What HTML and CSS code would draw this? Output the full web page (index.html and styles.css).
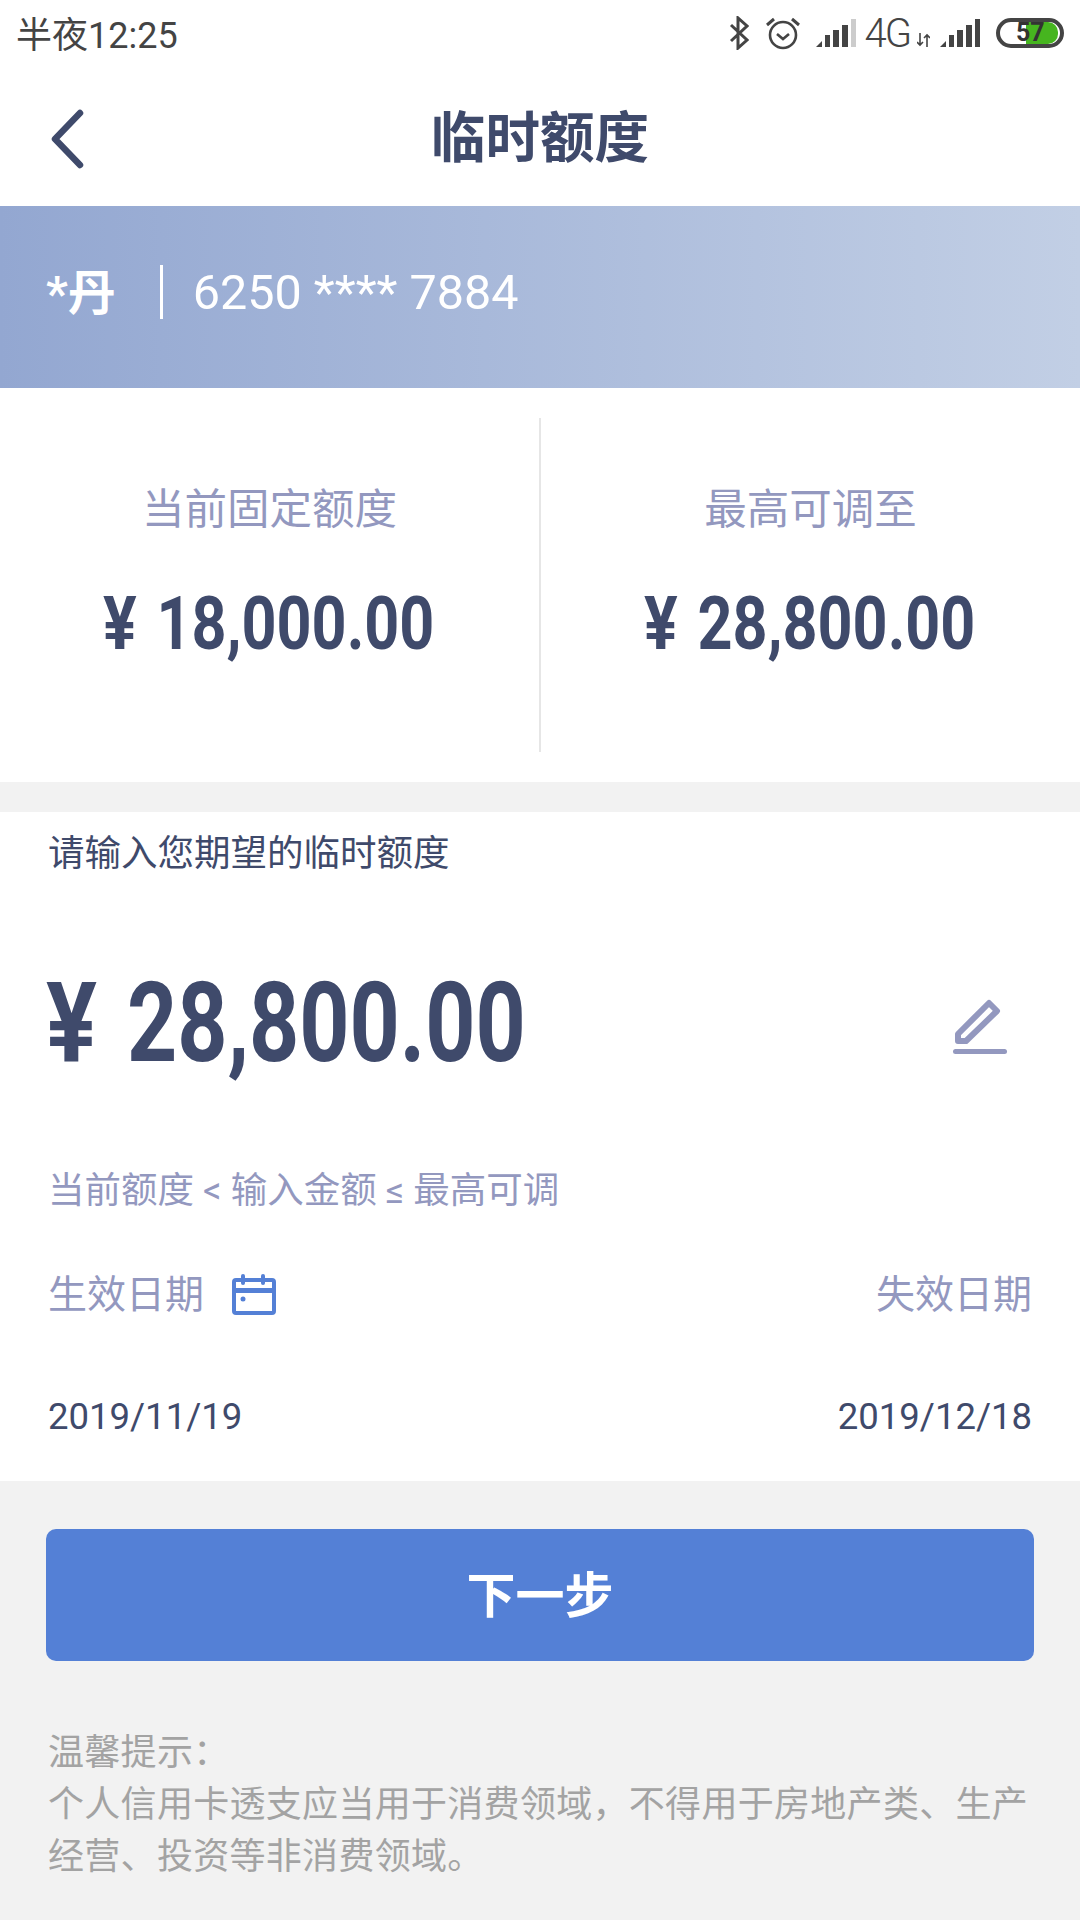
FILE: index.html
```html
<!DOCTYPE html>
<html lang="zh-CN">
<head>
    <meta charset="UTF-8">
    <meta name="viewport" content="width=device-width, initial-scale=1.0">
    <title>临时额度</title>
    <link rel="stylesheet" href="styles.css">
</head>
<body>
    <div class="status-bar">
        <span class="status-time">半夜12:25</span>
        <div class="status-icons">
            <svg class="icon-bt" width="20" height="34" viewBox="0 0 20 34"><path d="M2 9 L18 24 L9 32 V2 L18 10 L2 25" fill="none" stroke="#444" stroke-width="3"/></svg>
            <svg class="icon-alarm" width="34" height="34" viewBox="0 0 34 34"><circle cx="17" cy="19" r="13" fill="none" stroke="#444" stroke-width="2.6"/><path d="M11 18 L17 23 L23 18" fill="none" stroke="#444" stroke-width="2.6"/><path d="M1 9 L8 3 M33 9 L26 3" stroke="#444" stroke-width="3"/></svg>
            <svg class="icon-signal" width="40" height="28" viewBox="0 0 40 28"><path d="M0 28 L6 22 V28 Z" fill="#444"/><rect x="9" y="16" width="5" height="12" fill="#444"/><rect x="17" y="11" width="6" height="17" fill="#444"/><rect x="26" y="6" width="6" height="22" fill="#444"/><rect x="35" y="0" width="5" height="28" fill="#ccc"/></svg>
            <span class="status-net">4G</span>
            <svg class="icon-updown" width="13" height="14" viewBox="0 0 13 14"><path d="M3 0 V12 M0 9 L3 12 L6 9 M10 14 V2 M7 5 L10 2 L13 5" fill="none" stroke="#444" stroke-width="1.6"/></svg>
            <svg class="icon-signal" width="40" height="28" viewBox="0 0 40 28"><path d="M0 28 L6 22 V28 Z" fill="#444"/><rect x="9" y="16" width="5" height="12" fill="#444"/><rect x="17" y="11" width="6" height="17" fill="#444"/><rect x="26" y="6" width="6" height="22" fill="#444"/><rect x="35" y="0" width="5" height="28" fill="#444"/></svg>
            <div class="battery"><div class="battery-fill"></div><span class="battery-num">57</span></div>
        </div>
    </div>

    <header class="nav-bar">
        <svg class="back-icon" width="40" height="64" viewBox="0 0 40 64"><path d="M33 6 L8 32 L33 58" fill="none" stroke="#3f4a6b" stroke-width="6.5" stroke-linecap="round" stroke-linejoin="round"/></svg>
        <h1 class="nav-title">临时额度</h1>
    </header>

    <div class="card-banner">
        <span class="card-name">*丹</span>
        <span class="card-sep"></span>
        <span class="card-no">6250 **** 7884</span>
    </div>

    <section class="limits">
        <div class="limit-col">
            <div class="limit-label">当前固定额度</div>
            <div class="limit-value"><span class="yen">¥</span><span class="digits">18,000.00</span></div>
        </div>
        <div class="limit-col">
            <div class="limit-label">最高可调至</div>
            <div class="limit-value"><span class="yen">¥</span><span class="digits">28,800.00</span></div>
        </div>
    </section>

    <section class="form">
        <div class="form-title">请输入您期望的临时额度</div>
        <div class="amount-row">
            <div class="amount"><span class="yen">¥</span><span class="digits">28,800.00</span></div>
            <svg class="edit-icon" width="56" height="58" viewBox="0 0 56 58"><path d="M6 43 V36 L37 5 L45 13 L14 43 Z" fill="none" stroke="#9398bf" stroke-width="6" stroke-linejoin="round"/><rect x="1" y="51" width="54" height="5" rx="2.5" fill="#9398bf"/></svg>
        </div>
        <div class="range-hint">当前额度 &lt; 输入金额 ≤ 最高可调</div>
        <div class="date-labels">
            <div class="date-start">
                <span>生效日期</span>
                <svg class="calendar-icon" width="44" height="42" viewBox="0 0 44 42"><rect x="2" y="6" width="40" height="33" rx="2" fill="none" stroke="#5480d6" stroke-width="4"/><rect x="2" y="14" width="40" height="5" fill="#5480d6"/><rect x="9" y="0" width="4" height="11" rx="2" fill="#5480d6"/><rect x="29" y="0" width="4" height="11" rx="2" fill="#5480d6"/><circle cx="11" cy="25" r="2.5" fill="#5480d6"/></svg>
            </div>
            <span>失效日期</span>
        </div>
        <div class="date-values">
            <span>2019/11/19</span>
            <span>2019/12/18</span>
        </div>
    </section>

    <section class="bottom">
        <button class="next-btn">下一步</button>
        <p class="tips">温馨提示：<br>个人信用卡透支应当用于消费领域，不得用于房地产类、生产经营、投资等非消费领域。</p>
    </section>
</body>
</html>
```

FILE: styles.css
```css
* {
    box-sizing: border-box;
}

body {
    margin: 0;
    width: 1080px;
    height: 1920px;
    overflow: hidden;
    background-color: #f2f2f2;
    font-family: Roboto, "Noto Sans CJK SC", sans-serif;
    color: #3f4a6b;
}

.status-bar {
    height: 68px;
    background-color: #fff;
    display: flex;
    justify-content: space-between;
    align-items: center;
    padding: 0 16px 4px 16px;
    color: #444;
}

.status-time {
    font-size: 36px;
}

.status-icons {
    display: flex;
    align-items: center;
    padding-top: 2px;
}

.icon-alarm {
    margin-left: 17px;
}

.icon-signal {
    margin-left: 16px;
}

.status-net {
    margin-left: 8px;
    font-size: 40px;
    font-weight: 300;
    letter-spacing: -2px;
}

.icon-updown {
    margin: 14px 0 0 7px;
}

.icon-updown + .icon-signal {
    margin-left: 10px;
}

.battery {
    position: relative;
    width: 68px;
    height: 30px;
    margin-left: 16px;
    border: 4px solid #444;
    border-radius: 15px;
    overflow: hidden;
}

.battery-fill {
    width: 32px;
    height: 100%;
    margin-left: 26px;
    background-color: #46b51f;
    border-radius: 0 10px 10px 0;
}

.battery-num {
    position: absolute;
    top: -3px;
    left: 16px;
    font-size: 25px;
    font-weight: 700;
    line-height: 28px;
    color: #333;
}

.nav-bar {
    position: relative;
    height: 138px;
    padding-bottom: 8px;
    background-color: #fff;
    display: flex;
    align-items: center;
    justify-content: center;
}

.back-icon {
    position: absolute;
    left: 47px;
    top: 39px;
}

.nav-title {
    margin: 0;
    font-size: 54.5px;
    font-weight: 700;
    color: #3f4a6b;
}

.card-banner {
    height: 182px;
    display: flex;
    align-items: center;
    padding: 0 0 10px 46px;
    color: #fff;
    background: linear-gradient(90deg, #93a7d1, #c2cfe5);
}

.card-name {
    margin-bottom: 6px;
    font-size: 48px;
    font-weight: 700;
}

.card-sep {
    width: 3px;
    height: 54px;
    margin: 0 30px 0 44px;
    background-color: #fff;
}

.card-no {
    font-size: 48.5px;
}

.limits {
    height: 394px;
    padding: 30px 0;
    background-color: #fff;
    display: flex;
}

.limit-col {
    flex: 1;
    text-align: center;
    padding-top: 62px;
}

.limit-col:first-child {
    border-right: 2px solid #e6e6e6;
}

.limit-label {
    font-size: 42.5px;
    color: #9398bf;
    line-height: 60px;
}

/* digits in the reference are a narrow DIN-like face, so Roboto gets squeezed */
.limit-value {
    display: flex;
    justify-content: center;
    align-items: center;
    margin-top: 44px;
    font-size: 74px;
    font-weight: 700;
    line-height: 80px;
}

.limit-value .yen {
    transform: scaleX(0.85);
}

.limit-value .digits {
    margin: 0 -25px 0 -13px;
    transform: scaleX(0.825);
}

.form {
    height: 669px;
    margin-top: 30px;
    padding: 0 48px;
    background-color: #fff;
}

.form-title {
    font-size: 36.5px;
    line-height: 48px;
    padding-top: 18px;
    height: 66px;
}

.amount-row {
    display: flex;
    justify-content: space-between;
    align-items: center;
    margin-top: 85px;
    padding-right: 24px;
}

.amount {
    display: flex;
    align-items: center;
    font-size: 112px;
    font-weight: 700;
    line-height: 120px;
}

.amount .yen {
    margin-left: -2px;
    transform: scaleX(0.85);
    transform-origin: left center;
}

.amount .digits {
    margin-left: 21px;
    transform: scaleX(0.782);
    transform-origin: left center;
}

.edit-icon {
    margin-top: 8px;
}

.range-hint {
    margin-top: 84px;
    font-size: 36.5px;
    line-height: 48px;
    color: #9398bf;
}

.date-labels {
    display: flex;
    justify-content: space-between;
    align-items: center;
    margin-top: 53px;
    font-size: 39px;
    line-height: 54px;
    color: #9398bf;
}

.date-start {
    display: flex;
    align-items: center;
    gap: 28px;
}

.date-values {
    display: flex;
    justify-content: space-between;
    margin-top: 71px;
    font-size: 36.5px;
    line-height: 48px;
}

.bottom {
    padding: 48px 46px 0;
}

.next-btn {
    display: block;
    width: 100%;
    height: 132px;
    padding-bottom: 8px;
    border: none;
    border-radius: 10px;
    background-color: #5480d6;
    color: #fff;
    font-family: inherit;
    font-size: 49px;
    font-weight: 700;
}

.tips {
    margin: 66px 0 0;
    padding: 0 2px;
    font-size: 36px;
    letter-spacing: 0.3px;
    line-height: 52px;
    color: #a3a3a3;
}
```
